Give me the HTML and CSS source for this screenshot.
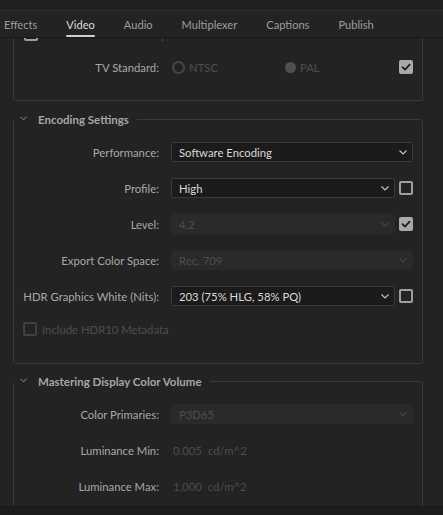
FILE: index.html
```html
<!DOCTYPE html>
<html>
<head>
<meta charset="utf-8">
<link rel="stylesheet" href="styles.css">
</head>
<body>
<div class="topband"></div>
<nav class="tabs">
  <span class="tab">Effects</span>
  <span class="tab active">Video</span>
  <span class="tab">Audio</span>
  <span class="tab">Multiplexer</span>
  <span class="tab">Captions</span>
  <span class="tab">Publish</span>
</nav>
<main class="content">
  <section class="box box-top">
    <div class="cut-row"><span class="cb cb-off cut-cb"></span><span class="cut-mark"></span></div>
    <div class="row">
      <span class="label">TV Standard:</span>
      <div class="ctrl radios">
        <span class="radio-opt ntsc"><span class="radio"></span>NTSC</span>
        <span class="radio-opt"><span class="radio filled"></span>PAL</span>
        <span class="cb cb-on push"><svg viewBox="0 0 14 14"><path d="M3.5 7.2 L6 9.6 L10.6 4.6" /></svg></span>
      </div>
    </div>
  </section>

  <fieldset class="group">
    <legend><svg class="chev" viewBox="0 0 8 5"><path d="M0.5 0.5 L4 4 L7.5 0.5"/></svg><span>Encoding Settings</span></legend>
    <div class="row">
      <span class="label">Performance:</span>
      <div class="ctrl"><div class="select"><span>Software Encoding</span><svg class="sel-chev" viewBox="0 0 8 5"><path d="M0.5 0.5 L4 4 L7.5 0.5"/></svg></div></div>
    </div>
    <div class="row">
      <span class="label">Profile:</span>
      <div class="ctrl with-cb"><div class="select"><span>High</span><svg class="sel-chev" viewBox="0 0 8 5"><path d="M0.5 0.5 L4 4 L7.5 0.5"/></svg></div><span class="cb cb-off"></span></div>
    </div>
    <div class="row">
      <span class="label">Level:</span>
      <div class="ctrl with-cb"><div class="select disabled"><span>4.2</span><svg class="sel-chev" viewBox="0 0 8 5"><path d="M0.5 0.5 L4 4 L7.5 0.5"/></svg></div><span class="cb cb-on"><svg viewBox="0 0 14 14"><path d="M3.5 7.2 L6 9.6 L10.6 4.6" /></svg></span></div>
    </div>
    <div class="row">
      <span class="label">Export Color Space:</span>
      <div class="ctrl"><div class="select disabled"><span>Rec. 709</span><svg class="sel-chev" viewBox="0 0 8 5"><path d="M0.5 0.5 L4 4 L7.5 0.5"/></svg></div></div>
    </div>
    <div class="row">
      <span class="label">HDR Graphics White (Nits):</span>
      <div class="ctrl with-cb"><div class="select"><span>203 (75% HLG, 58% PQ)</span><svg class="sel-chev" viewBox="0 0 8 5"><path d="M0.5 0.5 L4 4 L7.5 0.5"/></svg></div><span class="cb cb-off"></span></div>
    </div>
    <div class="check-row">
      <span class="cb cb-dis"></span><span class="dim">Include HDR10 Metadata</span>
    </div>
  </fieldset>

  <fieldset class="group group-last">
    <legend><svg class="chev" viewBox="0 0 8 5"><path d="M0.5 0.5 L4 4 L7.5 0.5"/></svg><span>Mastering Display Color Volume</span></legend>
    <div class="row">
      <span class="label">Color Primaries:</span>
      <div class="ctrl"><div class="select disabled"><span>P3D65</span><svg class="sel-chev" viewBox="0 0 8 5"><path d="M0.5 0.5 L4 4 L7.5 0.5"/></svg></div></div>
    </div>
    <div class="row">
      <span class="label">Luminance Min:</span>
      <div class="ctrl value"><span class="dim num">0.005</span><span class="dim">cd/m^2</span></div>
    </div>
    <div class="row">
      <span class="label">Luminance Max:</span>
      <div class="ctrl value"><span class="dim num">1,000</span><span class="dim">cd/m^2</span></div>
    </div>
  </fieldset>
</main>
<div class="bottombar"></div>
</body>
</html>
```

FILE: styles.css
```css
html, body {
  margin: 0;
  padding: 0;
}
body {
  width: 443px;
  height: 515px;
  overflow: hidden;
  background: #232323;
  font-family: Lato, "Noto Sans", sans-serif;
  font-size: 11.3px;
  color: #a6a6a6;
  position: relative;
}
.topband {
  height: 10px;
  background: #202020;
  border-bottom: 1px solid #303030;
}
.tabs {
  display: flex;
  align-items: center;
  gap: 29px;
  height: 27px;
  padding: 2px 0 0 4px;
  border-bottom: 1px solid #1a1a1a;
  box-sizing: border-box;
}
.tab {
  position: relative;
  color: #9e9e9e;
  font-size: 11.1px;
  line-height: 24px;
  white-space: nowrap;
}
.tab.active {
  color: #dcdcdc;
}
.tab.active::after {
  content: "";
  position: absolute;
  left: 0;
  right: 0;
  bottom: 0;
  height: 2px;
  border-radius: 1px;
  background: #cfcfcf;
}
.content {
  padding: 0 20px 0 13px;
}
.box {
  border: 1px solid #393939;
  border-top: none;
  border-radius: 0 0 3px 3px;
  padding: 0 9px 15px 0;
}
.cut-row {
  height: 3px;
  overflow: hidden;
  display: flex;
  align-items: flex-end;
  padding-left: 10px;
  margin-bottom: 8px;
}
.cut-cb {
  flex: none;
}
.cut-mark {
  width: 1px;
  height: 2px;
  background: #555;
  margin-left: 124px;
}
.row {
  display: grid;
  grid-template-columns: 145px 1fr;
  column-gap: 12px;
  align-items: center;
  height: 36px;
}
.label {
  text-align: right;
  white-space: nowrap;
  color: #a8a8a8;
}
.ctrl {
  display: flex;
  align-items: center;
  min-width: 0;
}
.with-cb {
  gap: 4px;
}
.with-cb .select {
  flex: 1;
}
.radios {
  color: #4f4f4f;
}
.radio-opt {
  display: flex;
  align-items: center;
  gap: 4px;
}
.radio-opt.ntsc {
  width: 113px;
  margin-left: 1px;
}
.radio {
  width: 9px;
  height: 9px;
  border: 2px solid #474747;
  border-radius: 50%;
}
.radio.filled {
  width: 11px;
  height: 11px;
  border: none;
  background: #505050;
}
.push {
  margin-left: auto;
}
.cb {
  display: inline-block;
  flex: none;
  width: 14px;
  height: 14px;
  box-sizing: border-box;
  border-radius: 2px;
}
.cb svg {
  display: block;
  width: 14px;
  height: 14px;
}
.cb svg path {
  fill: none;
  stroke: #1f1f1f;
  stroke-width: 1.8;
  stroke-linecap: round;
  stroke-linejoin: round;
}
.cb-on {
  background: #a9a9a9;
}
.cb-off {
  border: 2px solid #9f9f9f;
}
.cb-dis {
  border: 2px solid #414141;
}
.select {
  flex: 1;
  display: flex;
  align-items: center;
  justify-content: space-between;
  height: 20px;
  box-sizing: border-box;
  padding: 0 5px 0 7px;
  background: #1b1b1b;
  border: 1px solid #3a3a3a;
  border-radius: 2px;
  color: #d9d9d9;
  white-space: nowrap;
}
.select.disabled {
  background: #2a2a2a;
  border-color: #2a2a2a;
  border-radius: 3px;
  color: #4e4e4e;
}
.sel-chev {
  width: 8px;
  height: 5px;
  flex: none;
}
.sel-chev path, .chev path {
  fill: none;
  stroke: #c8c8c8;
  stroke-width: 1.1;
}
.select.disabled .sel-chev path {
  stroke: #444;
}
.group {
  margin: 10px 0 0;
  padding: 7px 9px 0 0;
  min-width: 0;
  border: 1px solid #393939;
  border-radius: 3px;
}
.group-last {
  margin-top: 9px;
  padding-bottom: 20px;
}
.group legend {
  display: flex;
  align-items: center;
  height: 16px;
  padding: 0 8px 0 0;
  margin: 0;
  color: #a6a6a6;
  font-weight: 700;
  font-size: 11.5px;
}
.chev {
  width: 7px;
  height: 5px;
  margin: 0 11px 2px 6px;
}
.chev path {
  stroke: #9a9a9a;
}
.check-row {
  display: flex;
  align-items: center;
  gap: 5px;
  height: 30px;
  padding-left: 9px;
  margin-bottom: 19px;
}
.dim {
  color: #4d4d4d;
}
.value {
  padding-left: 2px;
  gap: 6px;
}
.bottombar {
  position: absolute;
  left: 0;
  right: 0;
  bottom: 0;
  height: 8px;
  background: #1c1c1c;
  border-top: 1px solid #191919;
}
```
